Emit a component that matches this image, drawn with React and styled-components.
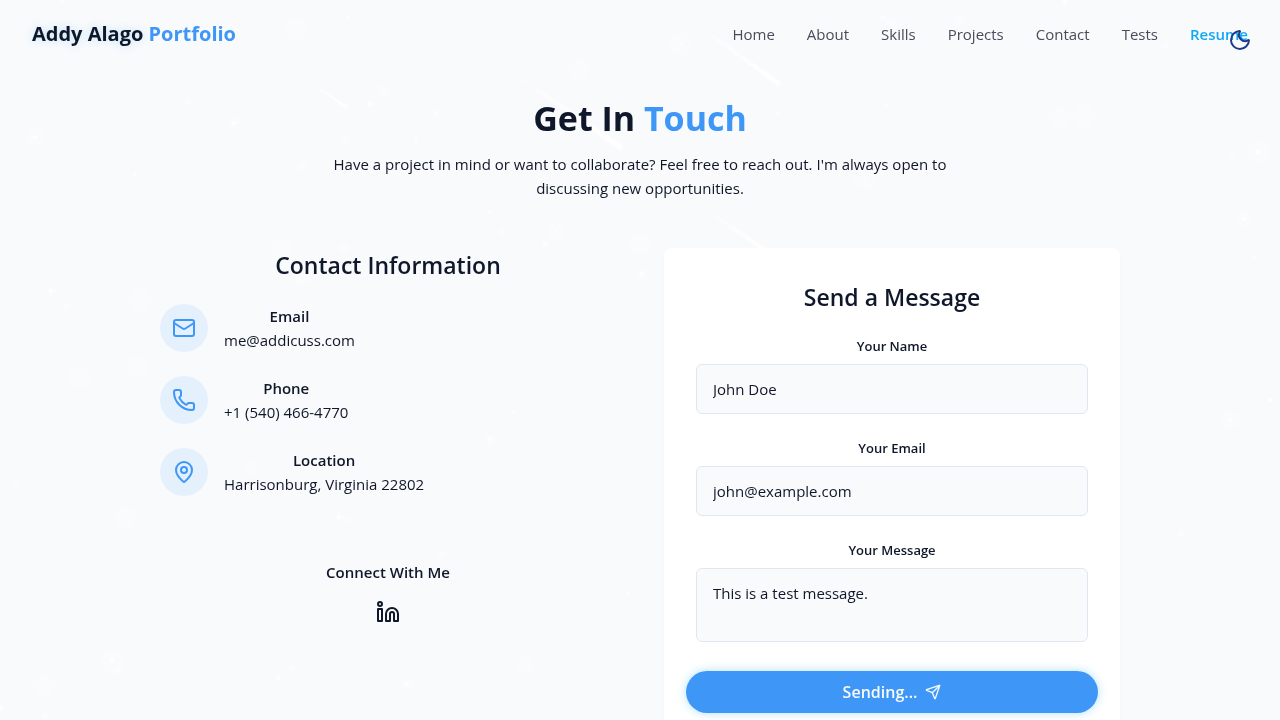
import React from "react";
import styled, { createGlobalStyle } from "styled-components";
import { Mail, Phone, MapPin, Linkedin, Send, Moon } from "lucide-react";

const GlobalStyle = createGlobalStyle`
  *, *::before, *::after { box-sizing: border-box; }
  body {
    margin: 0;
    background: #f9fafc;
    color: #0f172a;
    font-family: "Segoe UI", "Open Sans", "Noto Sans", sans-serif;
    font-size: 15px;
    line-height: 24px;
  }
  h1, h2, h3, p, ul { margin: 0; padding: 0; font: inherit; }
  a { color: inherit; text-decoration: none; }
  button, input, textarea { font: inherit; color: inherit; }
`;

const Page = styled.div`
  position: relative;
  min-height: 100vh;
  overflow-x: clip;
`;

const Sky = styled.svg`
  position: fixed;
  inset: 0;
  width: 100%;
  height: 100vh;
  pointer-events: none;
`;

const Header = styled.header`
  position: relative;
  display: flex;
  align-items: center;
  justify-content: space-between;
  padding: 20px 32px;
`;

const Logo = styled.a`
  font-size: 20px;
  line-height: 28px;
  font-weight: 700;
  text-shadow: 0 0 10px rgba(56, 178, 246, 0.3);
`;

const Accent = styled.span`
  color: #3e97f7;
  text-shadow: none;
`;

const NavList = styled.ul`
  display: flex;
  gap: 32px;
  list-style: none;
`;

const NavLink = styled.a`
  color: ${(p) => (p.$strong ? "#12a9f3" : "#484d5b")};
  font-weight: ${(p) => (p.$strong ? 600 : 400)};
`;

const ThemeButton = styled.button`
  position: fixed;
  top: 20px;
  right: 20px;
  display: grid;
  padding: 8px;
  border: 0;
  border-radius: 50%;
  background: none;
  color: #1e3a8a;
`;

const Contact = styled.main`
  position: relative;
  max-width: 1024px;
  margin: 0 auto;
  padding: 28px 32px 96px;
  text-align: center;
`;

const Title = styled.h1`
  margin-bottom: 12px;
  font-size: 34px;
  line-height: 44px;
  font-weight: 700;
`;

const Intro = styled.p`
  max-width: 672px;
  margin: 0 auto 48px;
`;

const Columns = styled.div`
  display: grid;
  grid-template-columns: 1fr 1fr;
  gap: 48px;
`;

const SectionTitle = styled.h2`
  margin-bottom: 22px;
  font-size: 23px;
  line-height: 34px;
  font-weight: 600;
`;

const InfoRows = styled.div`
  display: flex;
  flex-direction: column;
  gap: 24px;
`;

const InfoRow = styled.div`
  display: flex;
  align-items: center;
  gap: 16px;
`;

const IconCircle = styled.span`
  display: grid;
  place-items: center;
  width: 48px;
  height: 48px;
  border-radius: 50%;
  background: #e4f0fc;
  color: #3e97f7;
`;

const SmallTitle = styled.h3`
  font-weight: 600;
`;

const Social = styled.div`
  display: flex;
  flex-direction: column;
  align-items: center;
  gap: 16px;
  margin-top: 64px;
`;

const SocialLink = styled.a`
  display: grid;
`;

const Card = styled.section`
  padding: 32px;
  border-radius: 8px;
  background: #ffffff;
  box-shadow: 0 1px 2px rgba(0, 0, 0, 0.03);
`;

const Form = styled.form`
  display: flex;
  flex-direction: column;
  gap: 24px;
`;

const Field = styled.div`
  display: flex;
  flex-direction: column;
  gap: 8px;
`;

const Label = styled.label`
  font-size: 13px;
  line-height: 20px;
  font-weight: 600;
`;

const Input = styled.input`
  width: 100%;
  height: 50px;
  padding: 12px 16px;
  border: 1px solid #e1e7f0;
  border-radius: 6px;
  background: #f9fafc;
  outline: none;
`;

const Textarea = styled(Input)`
  height: 74px;
  resize: none;
`;

const SendButton = styled.button`
  display: flex;
  align-items: center;
  justify-content: center;
  gap: 8px;
  height: 42px;
  margin: 5px -10px 0;
  border: 0;
  border-radius: 21px;
  background: #3e97f7;
  color: #f8fafc;
  font-size: 16px;
  font-weight: 600;
  box-shadow: 0 0 10px rgba(56, 178, 246, 0.4);
`;

const links = ["Home", "About", "Skills", "Projects", "Contact", "Tests"];

const details = [
  { title: "Email", value: "me@addicuss.com", href: "mailto:me@addicuss.com", icon: Mail },
  { title: "Phone", value: "+1 (540) 466-4770", href: "tel:+15404664770", icon: Phone },
  { title: "Location", value: "Harrisonburg, Virginia 22802", icon: MapPin },
];

// Each star: x, y, core radius, halo radius.
const stars = [
  [35, 137, 2, 9], [63, 1, 1, 3], [187, 102, 1, 5], [234, 123, 2, 6], [135, 174, 1, 2],
  [296, 29, 1, 11], [348, 18, 1, 3], [383, 90, 1, 7], [370, 104, 2, 5], [345, 141, 1, 6],
  [436, 113, 1, 4], [416, 141, 1, 3], [302, 167, 1, 6], [51, 291, 2, 5], [66, 306, 1, 4],
  [140, 300, 1, 11], [138, 366, 1, 11], [79, 378, 1, 11], [125, 517, 1, 11], [282, 249, 1, 11],
  [344, 248, 1, 6], [303, 275, 1, 11], [250, 468, 1, 7], [339, 517, 2, 5], [346, 520, 1, 3],
  [112, 661, 2, 12], [119, 671, 1, 5], [44, 685, 1, 11], [1, 708, 2, 3], [45, 715, 1, 4],
  [16, 486, 1, 2], [9, 600, 1, 2], [278, 678, 2, 4], [293, 668, 1, 5], [407, 684, 2, 6],
  [526, 665, 1, 9], [628, 593, 1, 3], [442, 554, 1, 5], [490, 439, 2, 6], [408, 448, 1, 2],
  [514, 412, 1, 3], [579, 70, 1, 11], [681, 44, 1, 11], [490, 212, 1, 3], [502, 232, 1, 4],
  [556, 231, 1, 9], [545, 244, 2, 5], [640, 244, 1, 11], [642, 274, 2, 6], [777, 113, 1, 3],
  [883, 17, 1, 3], [891, 24, 1, 7], [960, 20, 1, 6], [1065, 2, 2, 3], [886, 105, 1, 3],
  [1060, 117, 1, 11], [1084, 116, 1, 11], [1166, 46, 1, 4], [865, 179, 1, 11], [1258, 152, 2, 12],
  [1232, 156, 1, 4], [1244, 219, 2, 9], [1255, 257, 1, 4], [1271, 400, 2, 3], [1230, 420, 2, 10],
  [1181, 534, 1, 4],
];

// Each meteor: tail x, tail y, head x, head y, width.
const meteors = [
  [304, 77, 346, 107, 2],
  [690, 20, 778, 83, 4],
  [502, 65, 620, 147, 5],
  [692, 200, 780, 260, 4],
];

function NightSky() {
  return (
    <Sky viewBox="0 0 1280 720" preserveAspectRatio="xMidYMid slice" aria-hidden="true">
      <defs>
        {meteors.map(([x1, y1, x2, y2], i) => (
          <linearGradient
            key={i}
            id={`meteor-${i}`}
            gradientUnits="userSpaceOnUse"
            x1={x1}
            y1={y1}
            x2={x2}
            y2={y2}
          >
            <stop offset="0" stopColor="#fff" stopOpacity="0" />
            <stop offset="1" stopColor="#fff" />
          </linearGradient>
        ))}
      </defs>
      {stars.map(([x, y, core, halo]) => (
        <g key={`${x}-${y}`} fill="#fff">
          <circle cx={x} cy={y} r={halo} opacity="0.25" />
          <circle cx={x} cy={y} r={core} opacity="0.9" />
        </g>
      ))}
      {meteors.map(([x1, y1, x2, y2, width], i) => (
        <g key={i} stroke={`url(#meteor-${i})`} strokeLinecap="round">
          <line x1={x1} y1={y1} x2={x2} y2={y2} strokeWidth={width + 6} opacity="0.2" />
          <line x1={x1} y1={y1} x2={x2} y2={y2} strokeWidth={width} />
        </g>
      ))}
    </Sky>
  );
}

export default function App() {
  return (
    <Page>
      <GlobalStyle />
      <NightSky />
      <Header>
        <Logo href="#home">
          Addy Alago <Accent>Portfolio</Accent>
        </Logo>
        <nav>
          <NavList>
            {links.map((name) => (
              <li key={name}>
                <NavLink href={`#${name.toLowerCase()}`}>{name}</NavLink>
              </li>
            ))}
            <li>
              <NavLink href="#resume" $strong>Resume</NavLink>
            </li>
          </NavList>
        </nav>
      </Header>
      <ThemeButton type="button" aria-label="Toggle theme">
        <Moon size={24} />
      </ThemeButton>
      <Contact>
        <Title>
          Get In <Accent>Touch</Accent>
        </Title>
        <Intro>
          Have a project in mind or want to collaborate? Feel free to reach out. I'm always open to
          discussing new opportunities.
        </Intro>
        <Columns>
          <section>
            <SectionTitle>Contact Information</SectionTitle>
            <InfoRows>
              {details.map(({ title, value, href, icon: Icon }) => (
                <InfoRow key={title}>
                  <IconCircle>
                    <Icon size={24} />
                  </IconCircle>
                  <div>
                    <SmallTitle>{title}</SmallTitle>
                    {href ? <a href={href}>{value}</a> : <span>{value}</span>}
                  </div>
                </InfoRow>
              ))}
            </InfoRows>
            <Social>
              <SmallTitle>Connect With Me</SmallTitle>
              <SocialLink href="#linkedin" aria-label="LinkedIn">
                <Linkedin size={24} />
              </SocialLink>
            </Social>
          </section>
          <Card>
            <SectionTitle>Send a Message</SectionTitle>
            <Form onSubmit={(e) => e.preventDefault()}>
              <Field>
                <Label htmlFor="name">Your Name</Label>
                <Input id="name" defaultValue="John Doe" />
              </Field>
              <Field>
                <Label htmlFor="email">Your Email</Label>
                <Input id="email" type="email" defaultValue="john@example.com" />
              </Field>
              <Field>
                <Label htmlFor="message">Your Message</Label>
                <Textarea as="textarea" id="message" defaultValue="This is a test message." />
              </Field>
              <SendButton type="submit">
                Sending... <Send size={16} />
              </SendButton>
            </Form>
          </Card>
        </Columns>
      </Contact>
    </Page>
  );
}
